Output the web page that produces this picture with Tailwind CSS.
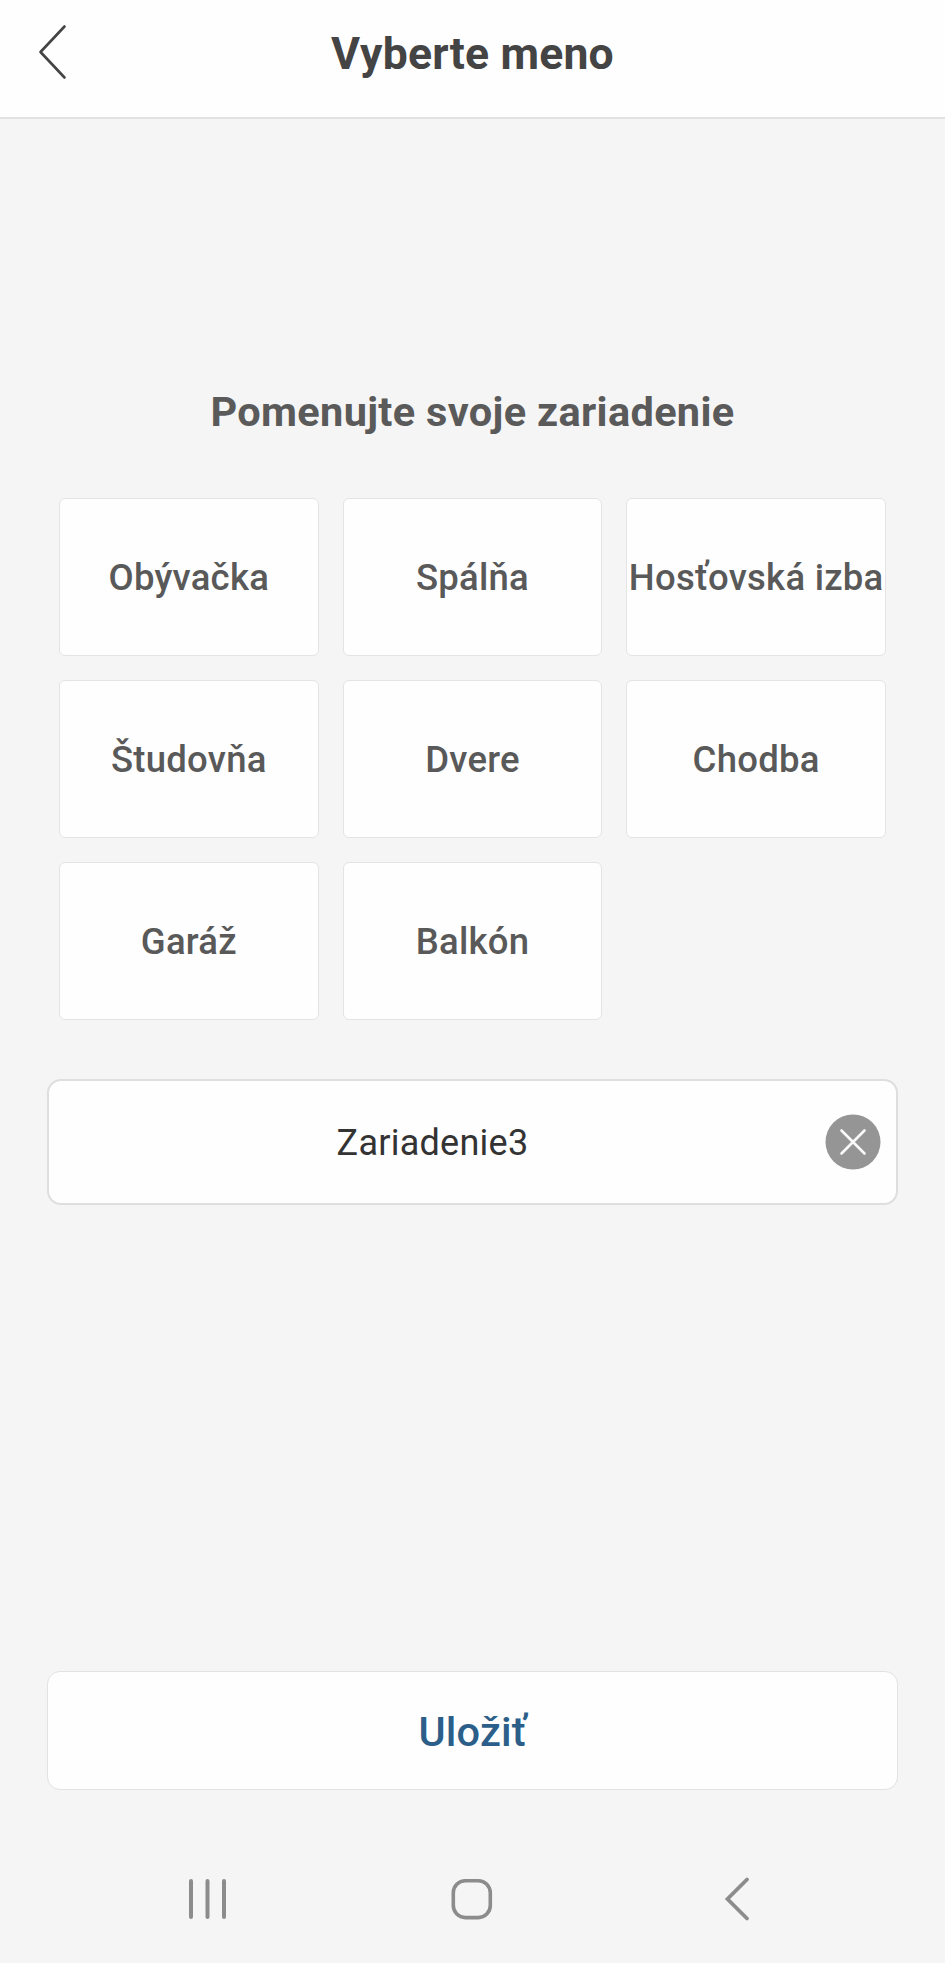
<!DOCTYPE html>
<html lang="sk">
<head>
  <meta charset="UTF-8" />
  <title>Vyberte meno</title>
  <script src="https://cdn.jsdelivr.net/npm/@tailwindcss/browser@4"></script>
</head>
<body class="bg-[#f5f5f5] font-['Roboto',sans-serif]">
  <div class="w-[945px] h-[1963px] flex flex-col overflow-hidden">
    <header class="h-[119px] shrink-0 flex items-start bg-[#fefefe] border-b-2 border-[#e2e2e2]">
      <button class="w-[105px] h-[103px] pl-[36px] flex items-center">
        <svg class="w-8 h-[60px]" viewBox="0 0 32 60" fill="none" stroke="#444" stroke-width="2.6" stroke-linecap="round" stroke-linejoin="round">
          <path d="M28.5 4.5 4.5 30 28.5 55.5" />
        </svg>
      </button>
      <h1 class="flex-1 text-center text-[44.5px] leading-[52px] pt-[28px] font-bold tracking-[0.2px] text-[#444]">Vyberte meno</h1>
      <div class="w-[105px]"></div>
    </header>

    <main class="flex-1 flex flex-col px-[47px]">
      <h2 class="mt-[269px] h-12 text-center text-[41.5px] leading-[48px] font-bold tracking-[0.33px] text-[#5a5a5a]">Pomenujte svoje zariadenie</h2>

      <div id="names" class="mt-[62px] mx-[12px] grid grid-cols-3 gap-x-[24px] gap-y-[24px] text-[36.5px] font-medium tracking-[0.25px] text-[#595959]">
        <button class="h-[158px] pt-[2px] bg-[#fefefe] border border-[#e4e4e4] rounded-md whitespace-nowrap">Obývačka</button>
        <button class="h-[158px] pt-[2px] bg-[#fefefe] border border-[#e4e4e4] rounded-md whitespace-nowrap">Spálňa</button>
        <button class="h-[158px] pt-[2px] bg-[#fefefe] border border-[#e4e4e4] rounded-md whitespace-nowrap">Hosťovská izba</button>
        <button class="h-[158px] pt-[2px] bg-[#fefefe] border border-[#e4e4e4] rounded-md whitespace-nowrap">Študovňa</button>
        <button class="h-[158px] pt-[2px] bg-[#fefefe] border border-[#e4e4e4] rounded-md whitespace-nowrap">Dvere</button>
        <button class="h-[158px] pt-[2px] bg-[#fefefe] border border-[#e4e4e4] rounded-md whitespace-nowrap">Chodba</button>
        <button class="h-[158px] pt-[2px] bg-[#fefefe] border border-[#e4e4e4] rounded-md whitespace-nowrap">Garáž</button>
        <button class="h-[158px] pt-[2px] bg-[#fefefe] border border-[#e4e4e4] rounded-md whitespace-nowrap">Balkón</button>
      </div>

      <div class="mt-[59px] h-[126px] flex items-center bg-[#fefefe] border-2 border-[#dedede] rounded-[14px] pr-[15px]">
        <input id="name" value="Zariadenie3" class="flex-1 min-w-0 pt-[2px] pr-[9px] text-center text-[36px] tracking-[0.25px] text-[#333] outline-none" />
        <button class="size-14">
          <svg class="size-14" viewBox="0 0 56 56">
            <circle cx="28" cy="28" r="27.5" fill="#959595" />
            <path d="M16.5 16.5 39.5 39.5M39.5 16.5 16.5 39.5" stroke="#fafafa" stroke-width="2.6" stroke-linecap="round" />
          </svg>
        </button>
      </div>

      <button class="mt-[466px] h-[119px] shrink-0 pt-[4px] bg-[#fefefe] border border-[#e2e2e2] rounded-[13px] text-[41.5px] font-medium tracking-[0.2px] text-[#2b5f8a]">Uložiť</button>
    </main>

    <nav class="h-[128px] shrink-0 flex justify-between pl-[183px] pr-[183px] pt-[40px]">
      <svg class="w-12 h-12" viewBox="0 0 48 48" fill="none" stroke="#8c8c8c" stroke-width="4" stroke-linecap="round">
        <path d="M8 6V42M24.5 6V42M41 6V42" />
      </svg>
      <svg class="w-12 h-12" viewBox="0 0 48 48" fill="none" stroke="#8c8c8c" stroke-width="3.6">
        <rect x="4.3" y="5.8" width="37" height="36.8" rx="12" />
      </svg>
      <svg class="w-12 h-12" viewBox="0 0 48 48" fill="none" stroke="#8c8c8c" stroke-width="3.8" stroke-linecap="round">
        <path d="M33 4.5 13.5 24 33 43.5" />
      </svg>
    </nav>
  </div>
</body>
</html>
